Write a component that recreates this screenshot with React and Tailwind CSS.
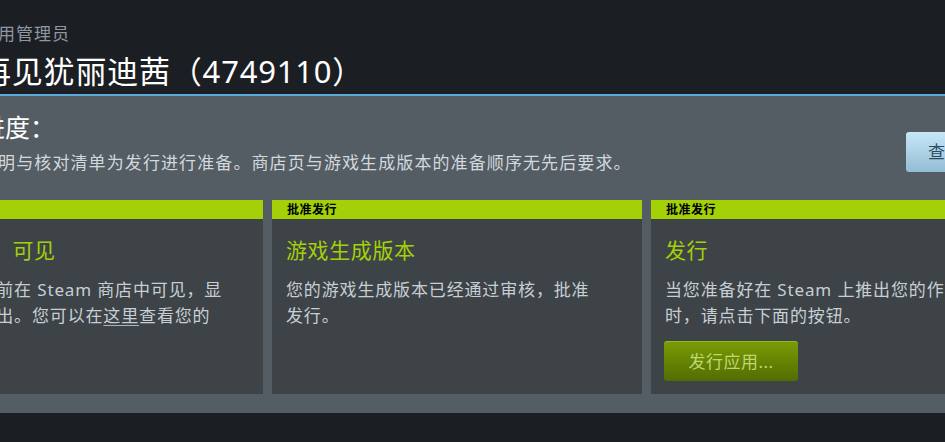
function Card({ label, title, children, action }) {
  return (
    <div className="w-[370px] shrink-0 flex flex-col bg-[#3d4347]">
      <div className="h-[19px] bg-[#a4d007] px-[15px] text-[12px] leading-[19px] font-bold tracking-[0.5px] text-black">
        {label}
      </div>
      <div className="flex-1 px-[14px] pt-[17px]">
        <h3 className="text-[21px] leading-[28px] tracking-[0.6px] text-[#a4d007]">{title}</h3>
        <p className="mt-[13px] w-[316px] text-[17px] leading-[26px] tracking-[0.85px] text-[#c7cfd5]">{children}</p>
        {action}
      </div>
    </div>
  )
}

export default function App() {
  return (
    <div className="w-[945px] h-[442px] overflow-hidden bg-[#1b1e23] font-['Noto_Sans','Noto_Sans_CJK_SC',sans-serif]">
      <div className="w-[1041px] -ml-[20px]">
        {/* ── Page title ── */}
        <header className="pt-[22px] pb-[5px]">
          <p className="text-[17px] leading-[24px] tracking-[1px] text-[#8f98a0]">应用管理员</p>
          <h1 className="mt-[7px] text-[31px] leading-[36px] tracking-[0.8px] text-white">再见犹丽迪茜（4749110）</h1>
        </header>

        {/* ── Release progress panel ── */}
        <section className="border-t-2 border-[#5ba8d9] bg-[#545c64] pt-[15px] pb-[19px]">
          <div className="flex items-start justify-between">
            <div>
              <h2 className="text-[25px] leading-[32px] text-white">进度：</h2>
              <p className="mt-[8px] text-[17px] leading-[24px] tracking-[1.1px] text-[#d3d8dc]">
                说明与核对清单为发行进行准备。商店页与游戏生成版本的准备顺序无先后要求。
              </p>
            </div>
            <button className="mt-[21px] h-[40px] w-[115px] rounded-[3px] bg-linear-to-b from-[#c8e7f8] to-[#93bcd5] pl-[22px] text-left text-[17px] tracking-[0.7px] text-[#2b4a60]">
              查看商店
            </button>
          </div>

          <div className="-ml-[87px] mt-[25px] flex h-[194px] gap-[9px]">
            <Card
              label="批准发行"
              title={<>商店页面<span className="ml-[19px]">可见</span></>}
            >
              商店页面目前在 Steam 商店中可见，显示为公开列出。您可以在<span className="underline decoration-[#aab4bb] underline-offset-[3px]">这里</span>查看您的商店页面。
            </Card>
            <Card label="批准发行" title="游戏生成版本">
              您的游戏生成版本已经通过审核，批准发行。
            </Card>
            <Card
              label="批准发行"
              title="发行"
              action={
                <button className="mt-[12px] -ml-px h-[40px] w-[134px] rounded-[3px] border-t border-[#96b81e] bg-linear-to-b from-[#7a9b04] to-[#546c02] text-[17px] tracking-[0.5px] text-[#bcd86f]">
                  发行应用...
                </button>
              }
            >
              当您准备好在 Steam 上推出您的作品时，请点击下面的按钮。
            </Card>
          </div>
        </section>
      </div>
    </div>
  )
}
